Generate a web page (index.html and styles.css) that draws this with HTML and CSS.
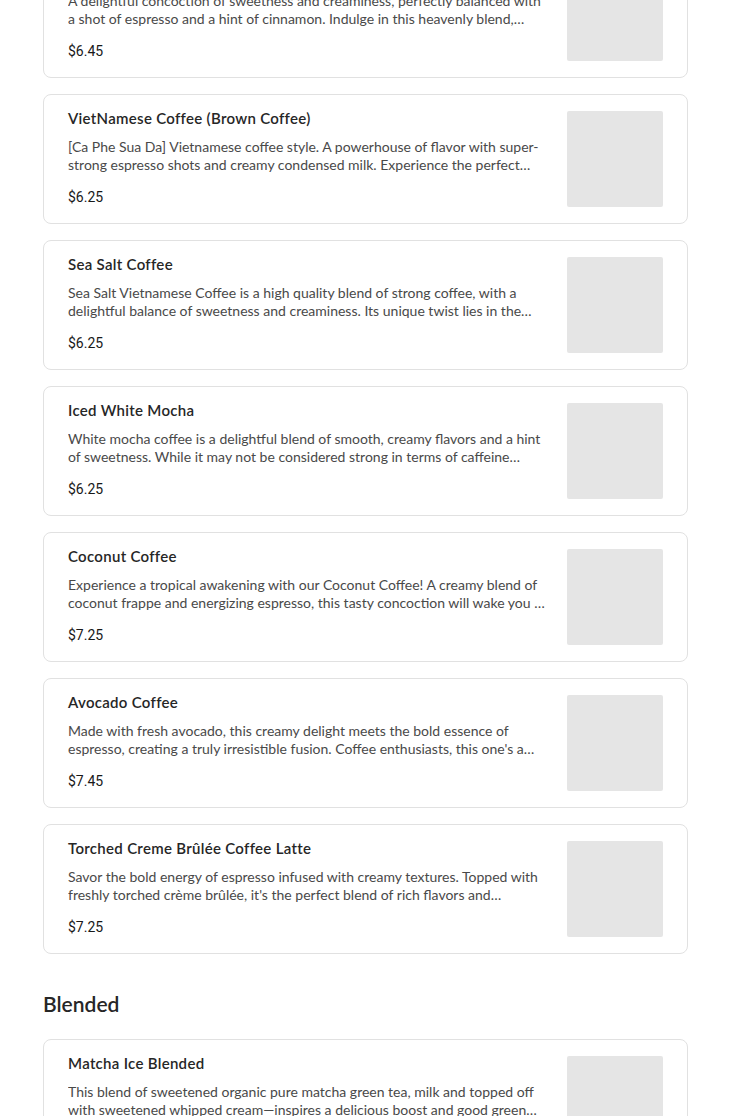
FILE: index.html
```html
<!DOCTYPE html>
<html lang="en">
<head>
<meta charset="utf-8">
<title>Menu</title>
<link rel="stylesheet" href="styles.css">
</head>
<body>
<main class="menu">
  <section class="list first">
    <article class="card">
      <div class="info">
        <h3 class="name">Horchata Latte</h3>
        <p class="desc">A delightful concoction of sweetness and creaminess, perfectly balanced with a shot of espresso and a hint of cinnamon. Indulge in this heavenly blend, where every sip is a treat.</p>
        <div class="price">$6.45</div>
      </div>
      <div class="thumb"></div>
    </article>
    <article class="card">
      <div class="info">
        <h3 class="name">VietNamese Coffee (Brown Coffee)</h3>
        <p class="desc">[Ca Phe Sua Da] Vietnamese coffee style. A powerhouse of flavor with super-strong espresso shots and creamy condensed milk. Experience the perfect balance of bold and sweet.</p>
        <div class="price">$6.25</div>
      </div>
      <div class="thumb"></div>
    </article>
    <article class="card">
      <div class="info">
        <h3 class="name">Sea Salt Coffee</h3>
        <p class="desc">Sea Salt Vietnamese Coffee is a high quality blend of strong coffee, with a delightful balance of sweetness and creaminess. Its unique twist lies in the salted cream topping.</p>
        <div class="price">$6.25</div>
      </div>
      <div class="thumb"></div>
    </article>
    <article class="card">
      <div class="info">
        <h3 class="name">Iced White Mocha</h3>
        <p class="desc">White mocha coffee is a delightful blend of smooth, creamy flavors and a hint of sweetness. While it may not be considered strong in terms of caffeine content, it is rich in taste.</p>
        <div class="price">$6.25</div>
      </div>
      <div class="thumb"></div>
    </article>
    <article class="card">
      <div class="info">
        <h3 class="name">Coconut Coffee</h3>
        <p class="desc">Experience a tropical awakening with our Coconut Coffee! A creamy blend of coconut frappe and energizing espresso, this tasty concoction will wake you up in the sweetest way.</p>
        <div class="price">$7.25</div>
      </div>
      <div class="thumb"></div>
    </article>
    <article class="card">
      <div class="info">
        <h3 class="name">Avocado Coffee</h3>
        <p class="desc">Made with fresh avocado, this creamy delight meets the bold essence of espresso, creating a truly irresistible fusion. Coffee enthusiasts, this one's a must-try treat.</p>
        <div class="price">$7.45</div>
      </div>
      <div class="thumb"></div>
    </article>
    <article class="card">
      <div class="info">
        <h3 class="name">Torched Creme Brûlée Coffee Latte</h3>
        <p class="desc">Savor the bold energy of espresso infused with creamy textures. Topped with freshly torched crème brûlée, it's the perfect blend of rich flavors and caramelized sweetness.</p>
        <div class="price">$7.25</div>
      </div>
      <div class="thumb"></div>
    </article>
  </section>

  <h2 class="section-title">Blended</h2>
  <section class="list">
    <article class="card">
      <div class="info">
        <h3 class="name">Matcha Ice Blended</h3>
        <p class="desc">This blend of sweetened organic pure matcha green tea, milk and topped off with sweetened whipped cream—inspires a delicious boost and good green energy in every sip.</p>
        <div class="price">$6.95</div>
      </div>
      <div class="thumb"></div>
    </article>
  </section>
</main>
</body>
</html>
```

FILE: styles.css
```css
* { box-sizing: border-box; }
html, body { margin: 0; padding: 0; background: #ffffff; }
body {
  font-family: Lato, "Noto Sans", sans-serif;
  color: #191919;
  overflow: hidden;
}
.menu {
  width: 645px;
  margin: -52px 0 0 43px;
}
.list {
  display: flex;
  flex-direction: column;
  gap: 16px;
}
.card {
  display: flex;
  gap: 16px;
  border: 1px solid #e1e1e1;
  border-radius: 8px;
  padding: 16px 24px 16px 24px;
  height: 130px;
}
.info {
  flex: 1;
  min-width: 0;
  display: flex;
  flex-direction: column;
}
.name {
  margin: -1px 0 0 0;
  font-size: 15px;
  font-weight: 600;
  line-height: 16px;
  color: #262626;
  letter-spacing: 0.3px;
}
.desc {
  margin: 12px 0 0 0;
  font-size: 14px;
  line-height: 18px;
  color: #494949;
  display: -webkit-box;
  -webkit-line-clamp: 2;
  -webkit-box-orient: vertical;
  overflow: hidden;
}
.price {
  margin-top: 14px;
  font-family: Roboto, "Liberation Sans", sans-serif;
  font-size: 14px;
  line-height: 18px;
  color: #191919;
}
.thumb {
  flex: 0 0 96px;
  width: 96px;
  height: 96px;
  background: #e5e5e5;
  border-radius: 2px;
}
.section-title {
  margin: 38px 0 23px 0;
  font-size: 21px;
  font-weight: 600;
  line-height: 24px;
  color: #262626;
}
```
